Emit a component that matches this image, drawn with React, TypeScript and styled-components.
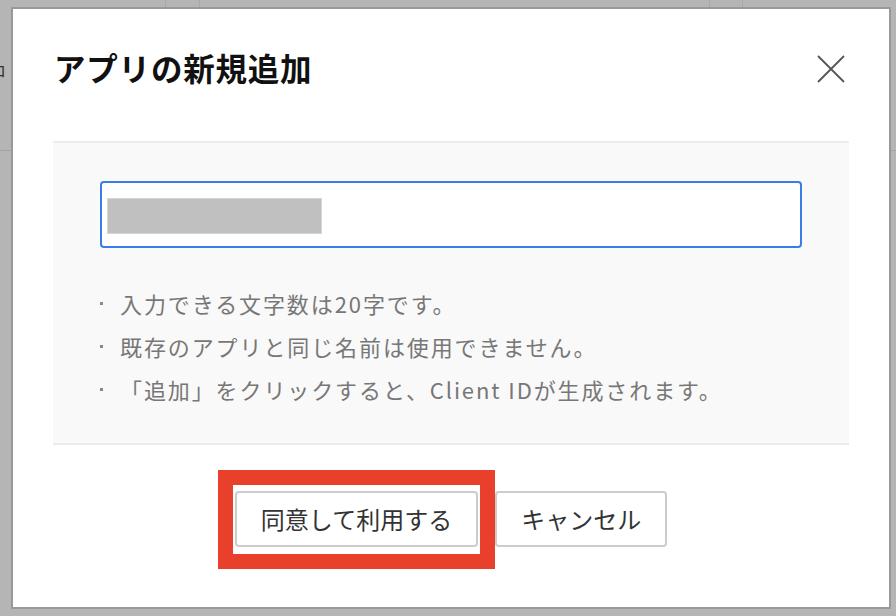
import React from "react";
import styled, { createGlobalStyle } from "styled-components";

const GlobalStyle = createGlobalStyle`
  html, body { margin: 0; padding: 0; }
  body {
    width: 896px;
    height: 616px;
    overflow: hidden;
    background: #ffffff;
    font-family: "Noto Sans CJK JP", "Noto Sans", sans-serif;
  }
  * { box-sizing: border-box; }
`;

const Screen = styled.div`
  position: relative;
  width: 896px;
  height: 616px;
  overflow: hidden;
`;

/* underlying page (dimmed by the overlay) */
const UnderPage = styled.div`
  display: grid;
  grid-template-columns: 166px 34px 510px 33px 1fr;
  grid-template-rows: 150px;
  border-bottom: 1px solid #e6e6e6;
`;

const UnderCell = styled.div<{ $last?: boolean }>`
  border-right: ${(p) => (p.$last ? "none" : "1px solid #ececec")};
  padding-top: 58px;
  font-size: 16px;
  color: #444;
  line-height: 24px;
`;

const CutText = styled.span`
  display: inline-block;
  margin-left: -10px;
`;

const Overlay = styled.div`
  position: absolute;
  inset: 0;
  background: rgba(0, 0, 0, 0.29);
  padding: 7px 5px 7px 11px;
  display: flex;
`;

const Modal = styled.div`
  width: 880px;
  height: 602px;
  background: #ffffff;
  border: 2px solid #999999;
  display: flex;
  flex-direction: column;
`;

const Header = styled.div`
  height: 132px;
  display: flex;
  align-items: flex-start;
  justify-content: space-between;
  padding: 38px 44px 0 41px;
`;

const Title = styled.h1`
  margin: 0;
  font-size: 31.5px;
  line-height: 40px;
  font-weight: 700;
  letter-spacing: 0.8px;
  color: #111;
`;

const CloseButton = styled.button`
  width: 28px;
  height: 28px;
  margin-top: 8px;
  padding: 0;
  border: none;
  background: transparent;
  display: flex;
  align-items: center;
  justify-content: center;
`;

const Panel = styled.div`
  margin: 0 40px;
  background: #f9f9f9;
  border-top: 2px solid #ececec;
  border-bottom: 2px solid #ececec;
  padding: 38px 47px 33px;
`;

const InputBox = styled.div`
  height: 67px;
  background: #ffffff;
  border: 2px solid #3b7de8;
  border-radius: 4px;
  display: flex;
  align-items: flex-start;
  padding: 15px 5px 0;
`;

const Redaction = styled.span`
  display: block;
  width: 215px;
  height: 36px;
  background: #c0c0c0;
  border: 1px solid #d6d6d6;
`;

const Notes = styled.ul`
  list-style: none;
  margin: 33px 0 0;
  padding: 0;
`;

const Note = styled.li`
  display: flex;
  align-items: center;
  height: 43px;
  font-size: 22px;
  letter-spacing: 1.9px;
  color: #777777;
  white-space: nowrap;
`;

const Dot = styled.span`
  width: 20px;
  flex: none;
  display: flex;
  align-items: center;
  &::before {
    content: "";
    width: 3px;
    height: 3px;
    margin-top: 2px;
    background: #8a8a8a;
  }
`;

const Footer = styled.div`
  padding-top: 46px;
  display: flex;
  justify-content: center;
  gap: 17px;
`;

const Highlight = styled.span`
  position: relative;
  display: inline-flex;
  &::after {
    content: "";
    position: absolute;
    top: -21px;
    left: -17px;
    right: -17px;
    bottom: -22px;
    border: 15px solid #e8402a;
    pointer-events: none;
  }
`;

const Button = styled.button`
  height: 56px;
  padding: 0 24px;
  background: #ffffff;
  border: 2px solid #cccccc;
  border-radius: 4px;
  font-family: "Noto Sans CJK JP", "Noto Sans", sans-serif;
  font-size: 24px;
  color: #333333;
  line-height: 1;
  cursor: pointer;
`;

export default function App() {
  return (
    <>
      <GlobalStyle />
      <Screen>
        <UnderPage>
          <UnderCell>
            <CutText>ロ</CutText>
          </UnderCell>
          <UnderCell />
          <UnderCell />
          <UnderCell />
          <UnderCell $last />
        </UnderPage>
        <Overlay>
          <Modal>
            <Header>
              <Title>アプリの新規追加</Title>
              <CloseButton aria-label="閉じる">
                <svg width="28" height="28" viewBox="0 0 28 28">
                  <path
                    d="M1 1 L27 27 M27 1 L1 27"
                    stroke="#555"
                    strokeWidth="1.8"
                    fill="none"
                  />
                </svg>
              </CloseButton>
            </Header>
            <Panel>
              <InputBox>
                <Redaction />
              </InputBox>
              <Notes>
                <Note>
                  <Dot />
                  入力できる文字数は20字です。
                </Note>
                <Note>
                  <Dot />
                  既存のアプリと同じ名前は使用できません。
                </Note>
                <Note>
                  <Dot />
                  「追加」をクリックすると、Client IDが生成されます。
                </Note>
              </Notes>
            </Panel>
            <Footer>
              <Highlight>
                <Button>同意して利用する</Button>
              </Highlight>
              <Button>キャンセル</Button>
            </Footer>
          </Modal>
        </Overlay>
      </Screen>
    </>
  );
}
